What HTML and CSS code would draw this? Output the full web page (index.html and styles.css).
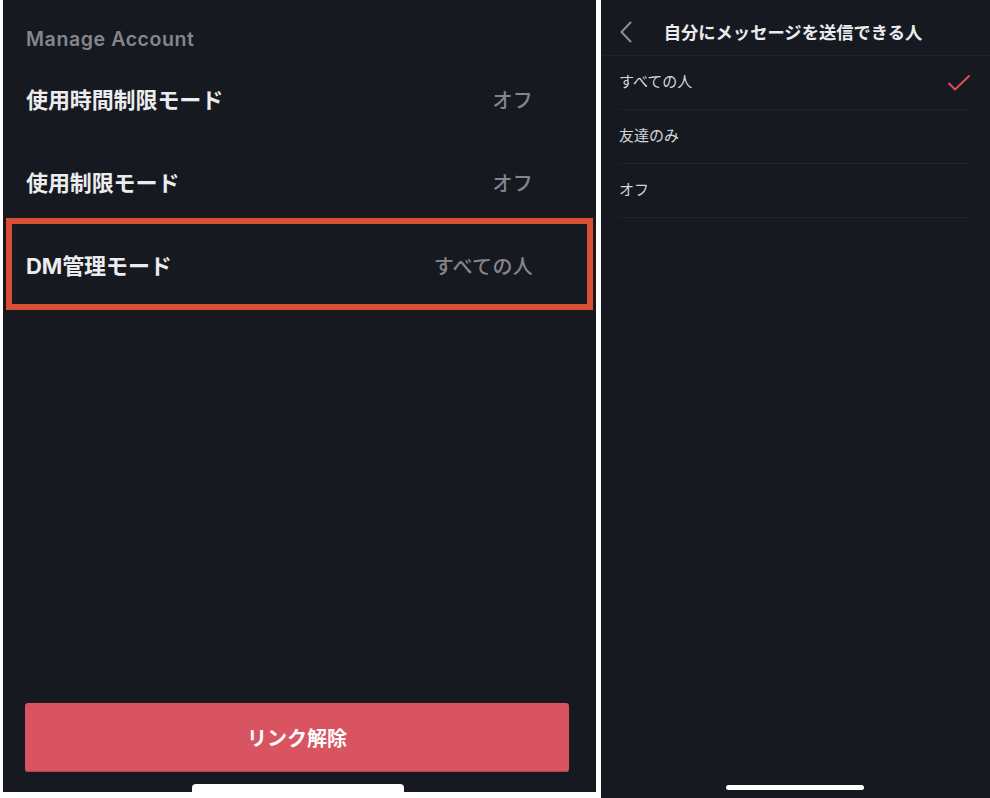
FILE: index.html
```html
<!DOCTYPE html>
<html lang="ja">
<head>
<meta charset="utf-8">
<title>Manage Account</title>
<link rel="stylesheet" href="styles.css">
</head>
<body>
<div class="screens">
  <section class="panel panel-left">
    <h2 class="section-title">Manage Account</h2>
    <div class="setting-row">
      <span class="setting-label">使用時間制限モード</span>
      <span class="setting-value">オフ</span>
    </div>
    <div class="setting-row">
      <span class="setting-label">使用制限モード</span>
      <span class="setting-value">オフ</span>
    </div>
    <div class="setting-row setting-row-highlight">
      <span class="setting-label">DM管理モード</span>
      <span class="setting-value">すべての人</span>
      <span class="highlight-box"></span>
    </div>
    <div class="spacer"></div>
    <button class="unlink-button">リンク解除</button>
    <div class="home-bar home-bar-left"></div>
  </section>
  <section class="panel panel-right">
    <header class="nav-header">
      <span class="nav-back">
        <svg width="14" height="22" viewBox="0 0 14 22"><path d="M11.5 1.5 L2.5 11 L11.5 20.5" fill="none" stroke="#8d8e94" stroke-width="2" stroke-linecap="round" stroke-linejoin="round"/></svg>
      </span>
      <h1 class="nav-title">自分にメッセージを送信できる人</h1>
      <span class="nav-filler"></span>
    </header>
    <ul class="option-list">
      <li class="option-item">
        <span>すべての人</span>
        <svg class="check" width="24" height="18" viewBox="0 0 24 18"><path d="M2 9.5 L8 15.5 L22 2" fill="none" stroke="#e24a5d" stroke-width="2" stroke-linecap="round" stroke-linejoin="round"/></svg>
      </li>
      <li class="option-item"><span>友達のみ</span></li>
      <li class="option-item"><span>オフ</span></li>
    </ul>
    <div class="spacer"></div>
    <div class="home-bar home-bar-right"></div>
  </section>
</div>
</body>
</html>
```

FILE: styles.css
```css
* { box-sizing: border-box; }

html, body {
  margin: 0;
  padding: 0;
  background: #ffffff;
}

body {
  width: 990px;
  height: 798px;
  overflow: hidden;
  font-family: "Noto Sans CJK JP", "Noto Sans", sans-serif;
}

.screens {
  display: flex;
  align-items: flex-start;
  gap: 5px;
  padding-left: 3px;
}

.panel {
  background: #171921;
  display: flex;
  flex-direction: column;
  overflow: hidden;
}

.panel-left {
  width: 593px;
  height: 792px;
}

.panel-right {
  width: 389px;
  height: 798px;
}

.section-title {
  margin: 0;
  padding: 27px 0 0 23px;
  height: 56px;
  line-height: 24px;
  font-family: "Inter", "Noto Sans", sans-serif;
  font-size: 19.5px;
  font-weight: 600;
  color: #85868c;
  letter-spacing: 0.6px;
}

.setting-row {
  height: 83px;
  display: flex;
  align-items: center;
  justify-content: space-between;
  padding: 0 63px 0 23px;
  position: relative;
}

.setting-label {
  font-size: 22px;
  font-weight: 700;
  color: #ececee;
  letter-spacing: -0.1px;
}

.setting-row-highlight .setting-label {
  font-family: "Inter", "Noto Sans CJK JP", sans-serif;
}

.setting-value {
  font-size: 20px;
  font-weight: 500;
  color: #85868c;
  letter-spacing: 0.3px;
  padding-top: 3px;
}

.highlight-box {
  position: absolute;
  top: -4px;
  bottom: -5px;
  left: 3px;
  right: 3px;
  border: 6px solid #d94f35;
  pointer-events: none;
}

.spacer { flex: 1; }

.unlink-button {
  margin: 0 27px 0 22px;
  height: 69px;
  border: none;
  border-radius: 3px;
  background: #d85461;
  color: #ffffff;
  font-family: "Noto Sans CJK JP", sans-serif;
  font-size: 20px;
  font-weight: 700;
  box-shadow: inset 0 -1px 0 #b5414d;
}

.home-bar {
  background: #ffffff;
  align-self: flex-start;
}

.home-bar-left {
  margin: 12px 0 0 189px;
  width: 212px;
  height: 8px;
  border-radius: 4px 4px 0 0;
}

.home-bar-right {
  margin: 0 0 8px 125px;
  width: 138px;
  height: 5px;
  border-radius: 3px;
}

.nav-header {
  height: 56px;
  display: grid;
  grid-template-columns: 1fr auto 1fr;
  align-items: center;
  border-bottom: 1px solid #1f222a;
  padding: 8px 23px 0 18px;
}

.nav-back {
  display: flex;
  align-items: center;
}

.nav-title {
  margin: 0;
  font-size: 17.3px;
  font-weight: 700;
  color: #ececee;
}

.option-list {
  list-style: none;
  margin: 0;
  padding: 0 20px 0 18px;
}

.option-item {
  height: 54px;
  display: flex;
  align-items: center;
  justify-content: space-between;
  border-bottom: 1px solid #20232b;
  font-size: 15px;
  color: #d6d6d8;
  padding-bottom: 5px;
}

.check {
  margin-right: -1px;
  margin-top: 5px;
}
```
